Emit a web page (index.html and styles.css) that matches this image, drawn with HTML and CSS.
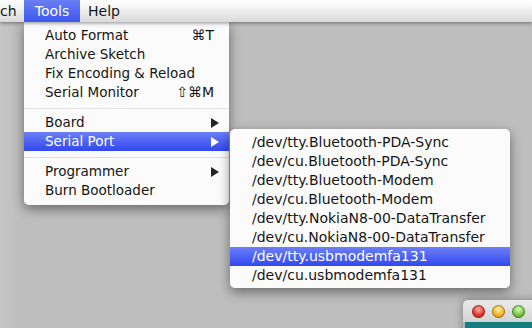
FILE: index.html
```html
<!DOCTYPE html>
<html>
  <head>
    <link rel="stylesheet" href="styles.css">
  </head>
  <body>
    <div class="menubar">
      <span class="mb-item mb-cut">ch</span>
      <span class="mb-item mb-active">Tools</span>
      <span class="mb-item">Help</span>
    </div>

    <div class="menu tools-menu">
      <div class="item"><span>Auto Format</span><span class="key">&#8984;T</span></div>
      <div class="item"><span>Archive Sketch</span></div>
      <div class="item"><span>Fix Encoding &amp; Reload</span></div>
      <div class="item"><span>Serial Monitor</span><span class="key">&#8679;&#8984;M</span></div>
      <div class="sep"></div>
      <div class="item"><span>Board</span><span class="arrow"></span></div>
      <div class="item active"><span>Serial Port</span><span class="arrow"></span></div>
      <div class="sep"></div>
      <div class="item"><span>Programmer</span><span class="arrow"></span></div>
      <div class="item"><span>Burn Bootloader</span></div>
    </div>

    <div class="menu port-menu">
      <div class="item"><span>/dev/tty.Bluetooth-PDA-Sync</span></div>
      <div class="item"><span>/dev/cu.Bluetooth-PDA-Sync</span></div>
      <div class="item"><span>/dev/tty.Bluetooth-Modem</span></div>
      <div class="item"><span>/dev/cu.Bluetooth-Modem</span></div>
      <div class="item"><span>/dev/tty.NokiaN8-00-DataTransfer</span></div>
      <div class="item"><span>/dev/cu.NokiaN8-00-DataTransfer</span></div>
      <div class="item active"><span>/dev/tty.usbmodemfa131</span></div>
      <div class="item"><span>/dev/cu.usbmodemfa131</span></div>
    </div>

    <div class="window">
      <div class="titlebar">
        <span class="light red"></span>
        <span class="light yellow"></span>
        <span class="light green"></span>
      </div>
      <div class="win-body"></div>
    </div>
  </body>
</html>
```

FILE: styles.css
```css
html,
body {
  margin: 0;
  width: 532px;
  height: 328px;
  overflow: hidden;
}

body {
  position: relative;
  background: linear-gradient(to right, #c6c6c6 0px, #bebebe 20px);
  font-family: "DejaVu Sans", sans-serif;
  font-size: 13.5px;
  color: #151515;
}

.menubar {
  display: flex;
  height: 22px;
  background: linear-gradient(#ffffff, #f2f2f2 40%, #d9d9d9);
  box-shadow: 0 1px 4px rgba(0, 0, 0, 0.45);
  position: relative;
  z-index: 3;
}

.mb-item {
  line-height: 22px;
  font-size: 14px;
}

.mb-cut {
  width: 24px;
}

.mb-active {
  width: 56px;
  text-align: center;
  background: linear-gradient(#6a7ff4, #3c56f0);
  color: #fff;
}

.mb-active + .mb-item {
  padding-left: 8px;
}

.menu {
  position: absolute;
  background: rgba(252, 252, 252, 0.98);
  border-radius: 0 0 5px 5px;
  box-shadow: 0 4px 12px rgba(0, 0, 0, 0.45);
  z-index: 2;
}

.tools-menu {
  left: 24px;
  top: 22px;
  width: 205px;
  padding: 4px 0 5px;
}

.port-menu {
  left: 230px;
  top: 129px;
  width: 280px;
  padding: 4px 0 3px;
  border-radius: 5px;
  font-size: 14px;
  z-index: 4;
}

.item {
  display: flex;
  justify-content: space-between;
  align-items: center;
  height: 19px;
  line-height: 19px;
  padding: 0 10px 0 21px;
  white-space: nowrap;
}

.port-menu .item {
  padding-left: 22px;
}

.item.active {
  background: linear-gradient(#6b7ff6, #3148f0);
  color: #fff;
}

.key {
  font-size: 14px;
  padding-right: 5px;
}

.arrow {
  width: 0;
  height: 0;
  border-top: 5px solid transparent;
  border-bottom: 5px solid transparent;
  border-left: 8px solid #222;
}

.active .arrow {
  border-left-color: #fff;
}

.sep {
  height: 11px;
  display: flex;
  align-items: center;
}

.sep::after {
  content: "";
  flex: 1;
  height: 1px;
  margin-top: 1px;
  background: #e2e2e2;
}

.window {
  position: absolute;
  left: 463px;
  top: 300px;
  width: 80px;
  height: 40px;
  border-radius: 5px 0 0 0;
  background: #b5b5b5;
  box-shadow: 0 0 8px rgba(0, 0, 0, 0.35);
  overflow: hidden;
}

.titlebar {
  display: flex;
  gap: 7px;
  height: 22px;
  padding-left: 9px;
  align-items: center;
  background: linear-gradient(#ececec, #d2d2d2);
}

.light {
  width: 13px;
  height: 13px;
  border-radius: 50%;
  box-shadow: inset 0 0 0 1px rgba(0, 0, 0, 0.3);
}

.red {
  background: radial-gradient(circle at 50% 35%, #ffb0a8, #e0302a 55%, #a41810);
}

.yellow {
  background: radial-gradient(circle at 50% 35%, #fff0b0, #f0b020 55%, #b77a08);
}

.green {
  background: radial-gradient(circle at 50% 35%, #d8ffb8, #70c040 55%, #3d8a1c);
}

.win-body {
  height: 18px;
  margin: 0 0 0 2px;
  background: #127e80;
}
```
